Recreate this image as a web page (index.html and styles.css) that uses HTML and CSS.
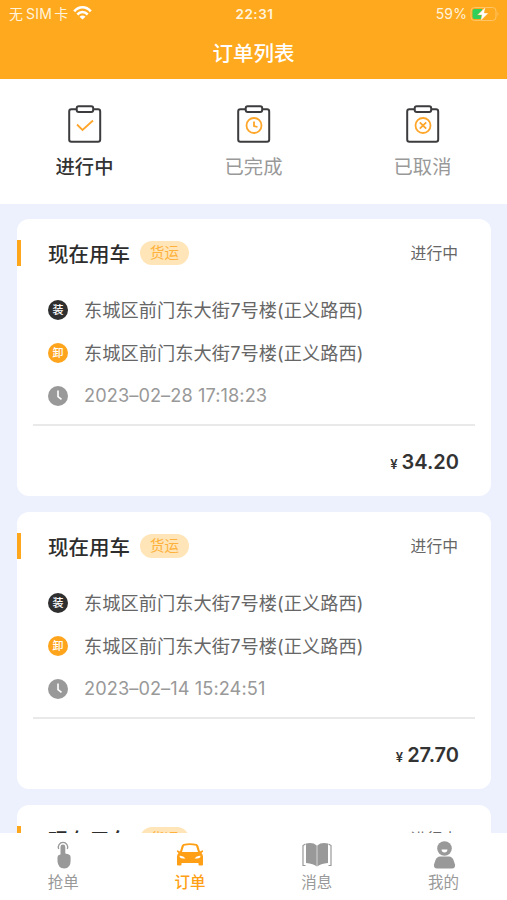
FILE: index.html
```html
<!DOCTYPE html>
<html lang="zh-CN">
<head>
<meta charset="utf-8">
<title>订单列表</title>
<link rel="stylesheet" href="styles.css">
</head>
<body>
<div class="app">
  <header class="header">
    <div class="status">
      <div class="carrier"><span>无</span><span class="sim">SIM</span><span>卡</span>
        <svg class="wifi" width="19" height="14" viewBox="0 0 19 14" fill="none" stroke="#fff" stroke-width="2.5"><path d="M1.2 5.3C6-0.1 13-.1 17.8 5.3"/><path d="M4.3 8.5c3.2-3.2 7.2-3.2 10.4 0"/><path d="M9.500 13.600L6.500 10.700q3-2.400 6 0z" fill="#fff" stroke="none"/></svg>
      </div>
      <div class="clock">22:31</div>
      <div class="power"><span>59%</span>
        <svg width="30" height="16" viewBox="0 0 30 16"><rect x="1" y="1.500" width="25" height="13" rx="3.500" fill="none" stroke="#ffc567"/><path d="M4.500 3H12v10H4.500Q2.500 13 2.500 11V5q0-2 2-2z" fill="#32d05a"/><path d="M27.500 6q2 2 0 4z" fill="#ffc567"/><path d="M15.500 1L7.500 9h4.300l-1.300 6L18.500 7h-4.300z" fill="#fff" stroke="#ffa91e" stroke-width=".4"/></svg>
      </div>
    </div>
    <h1 class="title">订单列表</h1>
  </header>

  <nav class="tabs">
    <div class="tab tab-active">
      <svg class="clip" viewBox="0 0 34 38"><rect class="board" x="1.200" y="4.300" width="31" height="32.500" rx="2.200"/><rect class="board clasp" x="8.700" y="1.200" width="16.500" height="5.800" rx="2"/><path class="mark" d="M9 19.500l5.500 5.500L25 15.500"/></svg>
      <span>进行中</span>
    </div>
    <div class="tab">
      <svg class="clip" viewBox="0 0 34 38"><rect class="board" x="1.200" y="4.300" width="31" height="32.500" rx="2.200"/><rect class="board clasp" x="8.700" y="1.200" width="16.500" height="5.800" rx="2"/><circle class="mark" cx="17" cy="20.500" r="7.500"/><path class="mark" d="M17 16.500v4.500l3.500 1"/></svg>
      <span>已完成</span>
    </div>
    <div class="tab">
      <svg class="clip" viewBox="0 0 34 38"><rect class="board" x="1.200" y="4.300" width="31" height="32.500" rx="2.200"/><rect class="board clasp" x="8.700" y="1.200" width="16.500" height="5.800" rx="2"/><circle class="mark" cx="17" cy="20.500" r="7.500"/><path class="mark" d="M13.800 17.300l6.400 6.400m0-6.400l-6.400 6.400"/></svg>
      <span>已取消</span>
    </div>
  </nav>

  <main class="list">
    <article class="card">
      <div class="head"><h2>现在用车</h2><span class="tag">货运</span><span class="state">进行中</span></div>
      <div class="rows">
        <div class="row"><i class="dot load">装</i><span>东城区前门东大街7号楼(正义路西)</span></div>
        <div class="row"><i class="dot unload">卸</i><span>东城区前门东大街7号楼(正义路西)</span></div>
        <div class="row date"><svg class="time" viewBox="0 0 20 20"><circle cx="10" cy="10" r="10" fill="#999"/><path d="M10 4.500v6l3.500 2.800" fill="none" stroke="#fff" stroke-width="1.600"/></svg><span>2023–02–28 17:18:23</span></div>
      </div>
      <div class="price"><small>¥</small><b>34.20</b></div>
    </article>
    <article class="card">
      <div class="head"><h2>现在用车</h2><span class="tag">货运</span><span class="state">进行中</span></div>
      <div class="rows">
        <div class="row"><i class="dot load">装</i><span>东城区前门东大街7号楼(正义路西)</span></div>
        <div class="row"><i class="dot unload">卸</i><span>东城区前门东大街7号楼(正义路西)</span></div>
        <div class="row date"><svg class="time" viewBox="0 0 20 20"><circle cx="10" cy="10" r="10" fill="#999"/><path d="M10 4.500v6l3.500 2.800" fill="none" stroke="#fff" stroke-width="1.600"/></svg><span>2023–02–14 15:24:51</span></div>
      </div>
      <div class="price"><small>¥</small><b>27.70</b></div>
    </article>
    <article class="card">
      <div class="head"><h2>现在用车</h2><span class="tag">货运</span><span class="state">进行中</span></div>
    </article>
  </main>

  <footer class="bar">
    <div class="item">
      <svg width="28" height="28" viewBox="0 0 28 28"><path d="M9.700 8A4.700 4.700 0 1 1 18.300 8" fill="none" stroke="#999" stroke-width="1.300"/><path d="M11.500 6a2.400 2.400 0 0 1 4.800 0V12.500l3 .7q2.300.5 2.300 2.800v4q0 7.200-6.300 7.500-6.300-.4-6.800-7v-4.500q.2-2.300 3-2.500z" fill="#999"/></svg>
      <span>抢单</span>
    </div>
    <div class="item item-active">
      <svg width="28" height="28" viewBox="0 0 28 28"><path fill="#ff9f16" fill-rule="evenodd" d="M7.500 3Q14 1.500 20.500 3q1.300.4 1.800 1.800L24 10.500l2.500-1.200q1 .2.500 1.500L25.500 12q1.500 1.500 1.500 3.500v8q0 1-1 1h-2.500q-1 0-1-1V22h-17v1.500q0 1-1 1H2q-1 0-1-1v-8Q1 13.500 2.500 12L1 10.800q-.5-1.300.5-1.500L4 10.500l1.700-5.700Q6.200 3.400 7.500 3zM8 4.700L6 11h16l-2-6.300Q14 3.500 8 4.700zM3.500 14.800q0 3 4 2.700h2Q7.500 14.500 3.500 14.800zm21 0q-4-.3-6 2.700h2q4 .3 4-2.700z"/></svg>
      <span>订单</span>
    </div>
    <div class="item">
      <svg width="30" height="28" viewBox="0 0 30 28"><path fill="#999" d="M4 2.500q7-1.500 10.700 2v21q-3-2.800-10.700-3.500zM26 2.500q-7-1.500-10.700 2v21q3-2.800 10.700-3.500z"/><path fill="none" stroke="#999" stroke-width="1.200" d="M3.500 3L1 4.500v20h2.500M26.500 3L29 4.500v20h-2.500"/></svg>
      <span>消息</span>
    </div>
    <div class="item">
      <svg width="28" height="28" viewBox="0 0 28 28"><circle cx="14.500" cy="7.500" r="7.300" fill="#999"/><path d="M11.500 8.500h6q-.3 3-3 3t-3-3z" fill="#fff"/><path d="M10 15.500h9q3 0 4.500 3.500l1.500 4.500q.5 4-3 4H7q-3.500 0-3-4L5.500 19Q7 15.500 10 15.500z" fill="#999"/></svg>
      <span>我的</span>
    </div>
  </footer>
</div>
</body>
</html>
```
FILE: styles.css
```css
* { box-sizing: border-box; }
body {
  margin: 0;
  font-family: Inter, "Noto Sans CJK SC", sans-serif;
  background: #edf1fe;
}
.app { height: 900px; display: flex; flex-direction: column; overflow: hidden; }
svg { display: block; flex: none; }

.header { height: 79px; flex: none; background: #ffa91e; color: #fff; }
.status {
  height: 28px; padding: 0 7px 0 9px;
  display: grid; grid-template-columns: 1fr auto 1fr; align-items: center;
  font-size: 14px; line-height: 28px; color: #fff3dc;
}
.carrier { display: flex; align-items: center; }
.sim { margin: 0 2px 0 3px; letter-spacing: .3px; }
.wifi { margin-left: 5px; margin-top: -2px; }
.clock { font-weight: 600; font-size: 13.5px; letter-spacing: .5px; }
.power { display: flex; align-items: center; justify-content: flex-end; gap: 3px; letter-spacing: .1px; }
.title {
  margin: 0; height: 51px; line-height: 52px; text-align: center;
  font-size: 20.5px; font-weight: 500;
}

.tabs { height: 125px; flex: none; display: flex; background: #fff; }
.tab {
  flex: 1; display: flex; flex-direction: column; align-items: center;
  padding-top: 26px; font-size: 19.3px; line-height: 28px; color: #999;
}
.tab span { margin-top: 10px; }
.tab-active { color: #333; font-weight: 500; }
.clip { width: 34px; height: 38px; }
.board { fill: none; stroke: #3c3c3f; stroke-width: 2; }
.clasp { fill: #fff; }
.mark { fill: none; stroke: #ffa62b; stroke-width: 1.8; }

.list { flex: 1; min-height: 0; overflow: hidden; padding: 15px 16px 0 17px; display: flex; flex-direction: column; gap: 16px; }
.card { height: 277px; flex: none; background: #fff; border-radius: 12px; padding-top: 21px; }
.head { display: flex; align-items: center; height: 26px; border-left: 4px solid #ffa71c; padding: 0 33px 0 27px; }
.head h2 { margin: 0; font-size: 20.5px; line-height: 29px; padding-top: 2px; font-weight: 500; color: #2d2d2d; }
.tag {
  margin-left: 10px; width: 49px; height: 24px; border-radius: 12px;
  background: #ffe5b7; color: #ffb13b; font-size: 14.500px; line-height: 23px; text-align: center;
}
.state { margin-left: auto; margin-top: -2px; font-size: 15.8px; color: #666; }
.rows { margin: 22px 16px 0; padding: 0 15px; height: 138px; border-bottom: 2px solid #e9e9e9; }
.row { display: flex; align-items: center; gap: 16px; height: 43px; font-size: 18.2px; letter-spacing: .08px; color: #666; white-space: nowrap; }
.row span { margin-top: -2px; }
.date { color: #999; }
.dot {
  width: 20px; height: 20px; flex: none; border-radius: 50%; color: #fff;
  font-size: 11px; line-height: 20px; font-style: normal; font-weight: 500; text-align: center;
}
.load { background: #2f2f2f; }
.unload { background: #ffa51d; }
.time { width: 20px; height: 20px; }
.price { display: flex; justify-content: flex-end; align-items: baseline; gap: 4px; padding: 21px 32px 0 0; color: #333; line-height: 30px; }
.price small { font-size: 13px; font-weight: 600; }
.price b { font-size: 20px; font-weight: 600; }

.bar { height: 67px; flex: none; display: flex; background: #fff; }
.item { flex: 1; display: flex; flex-direction: column; align-items: center; padding-top: 8px; font-size: 15.500px; line-height: 24px; color: #999; }
.item span { margin-top: 2px; }
.item-active { color: #ff9f16; font-weight: 500; }
```
